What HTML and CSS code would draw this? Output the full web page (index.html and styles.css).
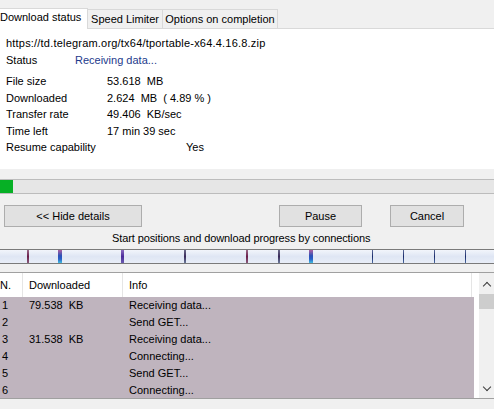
FILE: index.html
```html
<!DOCTYPE html>
<html>
<head>
<meta charset="utf-8">
<link rel="stylesheet" href="styles.css">
</head>
<body>
<div class="dialog">
  <div class="tabs">
    <div class="tab active">Download status</div>
    <div class="tab tab-speed">Speed Limiter</div>
    <div class="tab tab-options">Options on completion</div>
  </div>
  <div class="panel">
    <div class="url">https://td.telegram.org/tx64/tportable-x64.4.16.8.zip</div>
    <div class="status-row"><span class="status-label">Status</span><span class="status-value">Receiving data...</span></div>
    <div class="stats">
      <span>File size</span><span>53.618&nbsp; MB</span>
      <span>Downloaded</span><span>2.624&nbsp; MB&nbsp; ( 4.89 % )</span>
      <span>Transfer rate</span><span>49.406&nbsp; KB/sec</span>
      <span>Time left</span><span>17 min 39 sec</span>
      <span>Resume capability</span><span class="yes">Yes</span>
    </div>
  </div>
  <div class="progress"><div class="progress-fill"></div></div>
  <div class="buttons">
    <button class="btn btn-hide">&lt;&lt; Hide details</button>
    <button class="btn btn-pause">Pause</button>
    <button class="btn btn-cancel">Cancel</button>
  </div>
  <div class="caption">Start positions and download progress by connections</div>
  <div class="conn-bar">
    <i class="mk mk-red" style="left:27px"></i>
    <i class="mk mk-wide" style="left:58px"></i>
    <i class="mk mk-purple" style="left:121px"></i>
    <i class="mk mk-dark" style="left:184px"></i>
    <i class="mk mk-red" style="left:246px"></i>
    <i class="mk mk-dark" style="left:278px"></i>
    <i class="mk mk-wide" style="left:309px"></i>
    <i class="mk mk-blue" style="left:372px"></i>
    <i class="mk mk-blue" style="left:403px"></i>
    <i class="mk mk-blue" style="left:434px"></i>
    <i class="mk mk-blue" style="left:465px"></i>
  </div>
  <div class="list">
    <div class="list-main">
      <div class="list-head">
        <div class="c1">N.</div>
        <div class="c2">Downloaded</div>
        <div class="c3">Info</div>
      </div>
      <div class="list-body">
        <div class="row"><div class="c1">1</div><div class="c2">79.538&nbsp; KB</div><div class="c3">Receiving data...</div></div>
        <div class="row"><div class="c1">2</div><div class="c2"></div><div class="c3">Send GET...</div></div>
        <div class="row"><div class="c1">3</div><div class="c2">31.538&nbsp; KB</div><div class="c3">Receiving data...</div></div>
        <div class="row"><div class="c1">4</div><div class="c2"></div><div class="c3">Connecting...</div></div>
        <div class="row"><div class="c1">5</div><div class="c2"></div><div class="c3">Send GET...</div></div>
        <div class="row"><div class="c1">6</div><div class="c2"></div><div class="c3">Connecting...</div></div>
      </div>
    </div>
    <div class="scrollbar">
      <div class="sb-btn sb-top"><span class="chev chev-up"></span></div>
      <div class="thumb"></div>
      <div class="track"></div>
      <div class="sb-btn"><span class="chev chev-down"></span></div>
    </div>
  </div>
</div>
</body>
</html>
```
FILE: styles.css
```css
html, body {
  margin: 0;
  padding: 0;
  background: #f0f0f0;
  overflow: hidden;
}
body {
  width: 494px;
  height: 409px;
  font-family: "Liberation Sans", Arial, sans-serif;
  font-size: 11px;
  color: #000;
}
.dialog {
  width: 494px;
  height: 409px;
  overflow: hidden;
}
.tabs {
  display: flex;
  align-items: flex-end;
  height: 28px;
  margin-left: -5px;
}
.tab {
  box-sizing: border-box;
  height: 19px;
  line-height: 18px;
  border: 1px solid #d9d9d9;
  border-bottom: none;
  background: #f0f0f0;
  margin-left: -1px;
  white-space: nowrap;
  text-align: center;
}
.tab-speed { width: 76px; }
.tab-options { width: 116px; }
.tab.active {
  height: 21px;
  line-height: 17px;
  background: #fff;
  padding: 0 6px 0 4px;
  margin-left: 0;
  margin-bottom: -1px;
  position: relative;
  z-index: 1;
  width: 93px;
  text-align: left;
}
.panel {
  background: #fff;
  border-top: 1px solid #d9d9d9;
  padding: 6px 0 0 6px;
  box-sizing: border-box;
  height: 141px;
}
.url, .status-row {
  line-height: 17px;
  white-space: nowrap;
}
.url {
  letter-spacing: 0.2px;
}
.status-row {
  display: flex;
}
.status-label {
  width: 69px;
}
.status-value {
  color: #1d3a8c;
}
.stats {
  margin-top: 4px;
  display: grid;
  grid-template-columns: 101px 1fr;
  grid-auto-rows: 16.5px;
  line-height: 16px;
  white-space: nowrap;
}
.stats .yes {
  padding-left: 79px;
}
.progress {
  margin: 10px 0 0 -3px;
  width: 510px;
  height: 15px;
  box-sizing: border-box;
  border: 1px solid #bcbcbc;
  background: #e6e6e6;
}
.progress-fill {
  width: 15px;
  height: 13px;
  background: #06b025;
}
.buttons {
  display: flex;
  margin-top: 11px;
  height: 22px;
}
.btn {
  box-sizing: border-box;
  height: 22px;
  border: 1px solid #adadad;
  background: #e1e1e1;
  font-family: inherit;
  font-size: 11px;
  color: #000;
  padding: 0;
}
.btn-hide { margin-left: 4px; width: 138px; }
.btn-pause { margin-left: 137px; width: 83px; }
.btn-cancel { margin-left: 28px; width: 74px; }
.caption {
  margin-top: 4px;
  padding-left: 112px;
  line-height: 15px;
  white-space: nowrap;
  letter-spacing: -0.1px;
}
.conn-bar {
  position: relative;
  margin: 3px 0 0 -2px;
  width: 500px;
  height: 15px;
  box-sizing: border-box;
  border-top: 1px solid #7a7a7a;
  border-bottom: 1px solid #7a7a7a;
  background: linear-gradient(#f2f5fb, #dfe6f4 50%, #e8edf7);
}
.mk {
  position: absolute;
  top: 0;
  bottom: 0;
  width: 2px;
  margin-left: 2px;
}
.mk-red { background: linear-gradient(#9a6a8a, #6a1e4a 50%, #8a5a7a); }
.mk-dark { background: linear-gradient(#6a6a8a, #3a2a5a 50%, #6a7a9a); }
.mk-purple { width: 3px; background: linear-gradient(#8a6ac0, #4a2a9a 50%, #6a5ab0); }
.mk-wide { width: 4px; background: linear-gradient(#b060a0, #2a50b8 45%, #2a60c8 70%, #40c0e0); }
.mk-blue { width: 1px; background: linear-gradient(#5a6a9a, #1a2a6a 50%, #4a6aa0); }
.list {
  margin-top: 8px;
  height: 127px;
  box-sizing: border-box;
  border-top: 1px solid #a0a0a0;
  border-bottom: 1px solid #a0a0a0;
  display: flex;
  background: #fff;
}
.list-main {
  flex: none;
  width: 479px;
  overflow: hidden;
}
.list-head {
  display: flex;
  height: 24px;
  line-height: 25px;
  background: #fff;
  margin-left: -2px;
}
.list-head > div {
  box-sizing: border-box;
  border-right: 1px solid #e5e5e5;
  padding-left: 2px;
  white-space: nowrap;
}
.list-head .c2 { padding-left: 6px; }
.list-head .c3 { padding-left: 6px; width: 349px; }
.c1 { width: 25px; }
.c2 { width: 100px; }
.c3 { flex: none; }
.list-body {
  margin-left: -2px;
  width: 476px;
  background: #bfb4be;
  height: 101px;
  overflow: hidden;
}
.row {
  display: flex;
  height: 17px;
  line-height: 17px;
  white-space: nowrap;
}
.row > div { box-sizing: border-box; }
.row .c1 { padding-left: 4px; }
.row .c2 { padding-left: 6px; }
.row .c3 { padding-left: 6px; }
.scrollbar {
  flex: none;
  width: 15px;
  background: #f0f0f0;
  display: flex;
  flex-direction: column;
}
.sb-btn {
  flex: none;
  height: 19px;
  display: flex;
  align-items: center;
  justify-content: center;
}
.sb-top {
  height: 21px;
}
.chev {
  display: block;
  width: 5px;
  height: 5px;
  border-left: 1.5px solid #3c3c3c;
  border-top: 1.5px solid #3c3c3c;
}
.chev-up {
  transform: translateY(2px) rotate(45deg);
}
.chev-down {
  transform: translateY(-2px) rotate(225deg);
}
.thumb {
  flex: none;
  width: 15px;
  height: 15px;
  background: #cdcdcd;
}
.track {
  flex: 1;
}
```
